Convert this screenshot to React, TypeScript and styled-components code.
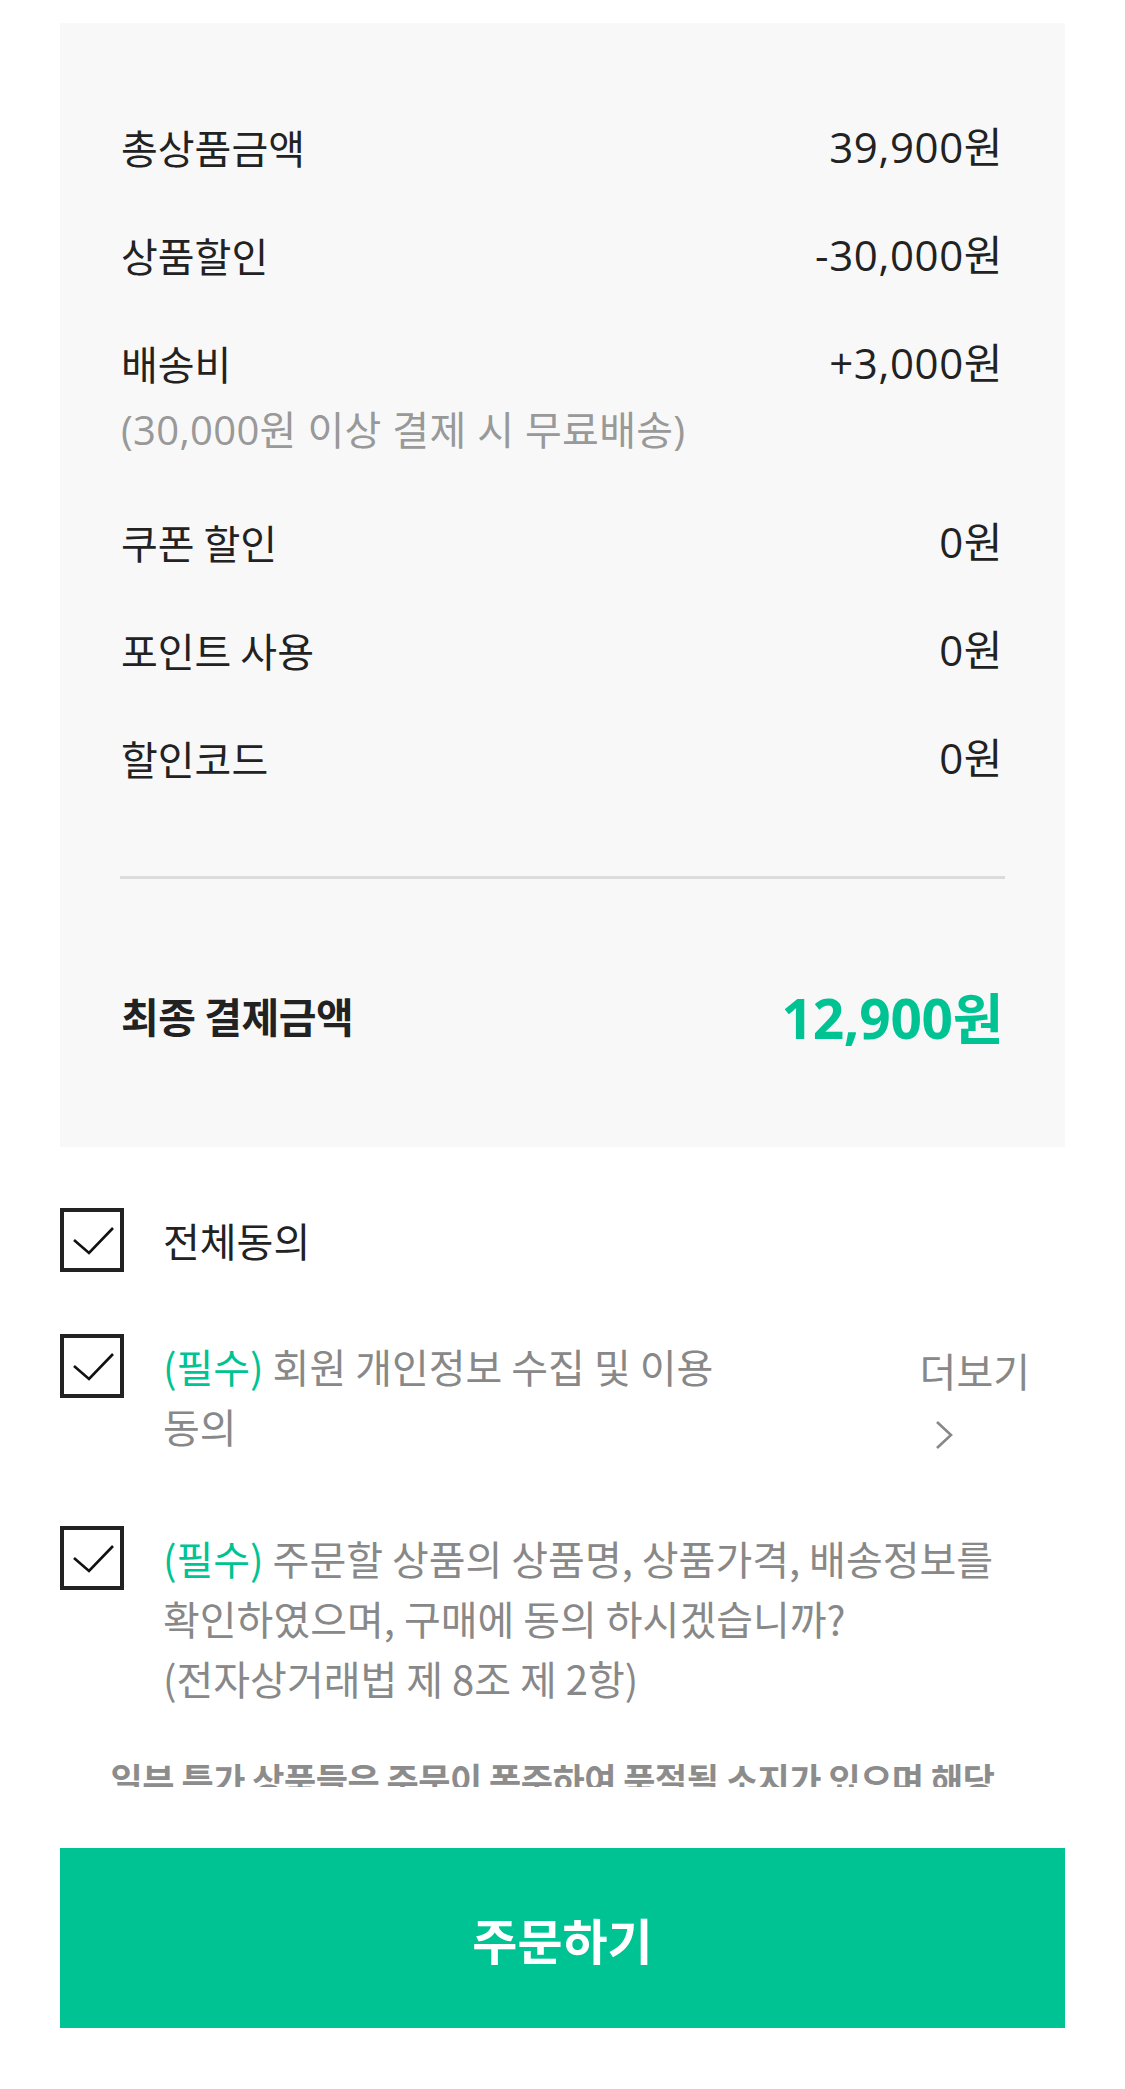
import React from "react";
import styled, { createGlobalStyle } from "styled-components";

const GREEN = "#00C393";

const Global = createGlobalStyle`
  html, body { margin: 0; padding: 0; background: #fff; }
  body {
    font-family: "Noto Sans CJK KR", "Noto Sans", sans-serif;
    color: #222;
    word-break: keep-all;
  }
  * { box-sizing: border-box; }
`;

const Page = styled.div`
  width: 1125px;
  height: 2089px;
  display: flex;
  flex-direction: column;
  background: #fff;
`;

const Content = styled.div`
  height: 1787px;
  overflow: hidden;
  padding: 23px 60px 0;
`;

const Summary = styled.section`
  background: #f8f8f8;
  padding: 94px 62px 97px 61px;
`;

const RowList = styled.div`
  display: flex;
  flex-direction: column;
  gap: 48px;
`;

const Row = styled.div<{ $extra?: number }>`
  display: flex;
  justify-content: space-between;
  align-items: flex-start;
  padding-bottom: ${(p) => p.$extra ?? 0}px;
`;

const LabelCol = styled.div`
  display: flex;
  flex-direction: column;
`;

const Label = styled.span`
  font-size: 40px;
  line-height: 60px;
  color: #222;
`;

const SubNote = styled.span`
  font-family: "Open Sans", "Noto Sans CJK KR", sans-serif;
  font-size: 40px;
  line-height: 60px;
  color: #999;
  margin-top: 7px;
  letter-spacing: 0.3px;
`;

const Value = styled.span`
  font-family: "Open Sans", "Noto Sans CJK KR", sans-serif;
  font-size: 42px;
  line-height: 60px;
  color: #222;
  letter-spacing: 0.6px;
`;

const Divider = styled.hr`
  border: 0;
  height: 3px;
  background: #dcdcdc;
  margin: 88px -2px 0 -1px;
`;

const TotalRow = styled.div`
  display: flex;
  justify-content: space-between;
  align-items: center;
  margin-top: 101px;
  height: 70px;
`;

const TotalLabel = styled.span`
  font-size: 41px;
  font-weight: 700;
  color: #222;
  letter-spacing: -0.5px;
`;

const TotalValue = styled.span`
  font-family: "Open Sans", "Noto Sans CJK KR", sans-serif;
  font-size: 55px;
  font-weight: 700;
  color: ${GREEN};
  letter-spacing: -0.3px;
`;

const Agreements = styled.div`
  display: flex;
  flex-direction: column;
  gap: 62px;
  padding-top: 61px;
`;

const AgreeRow = styled.div`
  display: flex;
  align-items: flex-start;
`;

const Box = styled.span`
  flex: 0 0 64px;
  width: 64px;
  height: 64px;
  border: 4px solid #222;
  display: flex;
  align-items: center;
  justify-content: center;
`;

const AgreeText = styled.p<{ $dark?: boolean; $width?: number }>`
  margin: 2px 0 0 39px;
  font-size: 40px;
  line-height: 60px;
  color: ${(p) => (p.$dark ? "#222" : "#888")};
  ${(p) => (p.$width ? `flex: 0 0 ${p.$width}px;` : "flex: 1; padding-right: 30px;")}
`;

const Req = styled.span`
  color: ${GREEN};
`;

const More = styled.div`
  margin-left: auto;
  margin-right: 35px;
  display: flex;
  flex-direction: column;
  align-items: flex-start;
  height: 130px;
  padding-top: 6px;
`;

const MoreText = styled.span`
  font-size: 40px;
  line-height: 60px;
  color: #888;
`;

const Chevron = styled.svg`
  margin: 20px 0 0 15px;
`;

const Notice = styled.p`
  margin: 43px 0 0;
  padding: 0 30px 0 10px;
  font-size: 35px;
  line-height: 56px;
  font-weight: 700;
  color: #8c8c8c;
  text-align: center;
  letter-spacing: -0.5px;
`;

const Footer = styled.div`
  padding: 61px 60px;
`;

const OrderButton = styled.button`
  width: 100%;
  height: 180px;
  border: 0;
  background: ${GREEN};
  color: #fff;
  font-family: "Noto Sans CJK KR", sans-serif;
  font-size: 49px;
  font-weight: 700;
  cursor: pointer;
`;

const Check = () => (
  <svg width="56" height="56" viewBox="0 0 56 56">
    <polyline points="10,28 25,41 49,16" fill="none" stroke="#111" strokeWidth="2.6" />
  </svg>
);

const rows: { label: string; value: string; note?: string }[] = [
  { label: "총상품금액", value: "39,900원" },
  { label: "상품할인", value: "-30,000원" },
  { label: "배송비", value: "+3,000원", note: "(30,000원 이상 결제 시 무료배송)" },
  { label: "쿠폰 할인", value: "0원" },
  { label: "포인트 사용", value: "0원" },
  { label: "할인코드", value: "0원" },
];

export default function App() {
  return (
    <>
      <Global />
      <Page>
        <Content>
          <Summary>
            <RowList>
              {rows.map((r) => (
                <Row key={r.label} $extra={r.note ? 4 : 0}>
                  <LabelCol>
                    <Label>{r.label}</Label>
                    {r.note && <SubNote>{r.note}</SubNote>}
                  </LabelCol>
                  <Value>{r.value}</Value>
                </Row>
              ))}
            </RowList>
            <Divider />
            <TotalRow>
              <TotalLabel>최종 결제금액</TotalLabel>
              <TotalValue>12,900원</TotalValue>
            </TotalRow>
          </Summary>

          <Agreements>
            <AgreeRow>
              <Box>
                <Check />
              </Box>
              <AgreeText $dark>전체동의</AgreeText>
            </AgreeRow>
            <AgreeRow>
              <Box>
                <Check />
              </Box>
              <AgreeText $width={600}>
                <Req>(필수)</Req> 회원 개인정보 수집 및 이용 동의
              </AgreeText>
              <More>
                <MoreText>더보기</MoreText>
                <Chevron width="18" height="30" viewBox="0 0 18 30">
                  <polyline points="2,2 16,15 2,28" fill="none" stroke="#888" strokeWidth="2.6" />
                </Chevron>
              </More>
            </AgreeRow>
            <AgreeRow>
              <Box>
                <Check />
              </Box>
              <AgreeText>
                <Req>(필수)</Req> 주문할 상품의 상품명, 상품가격, 배송정보를 확인하였으며, 구매에 동의
                하시겠습니까?
                <br />
                (전자상거래법 제 8조 제 2항)
              </AgreeText>
            </AgreeRow>
          </Agreements>

          <Notice>
            일부 특가 상품들은 주문이 폭주하여 품절될 소지가 있으며 해당 상품은 주문 후 취소될 수 있습니다.
          </Notice>
        </Content>
        <Footer>
          <OrderButton>주문하기</OrderButton>
        </Footer>
      </Page>
    </>
  );
}
